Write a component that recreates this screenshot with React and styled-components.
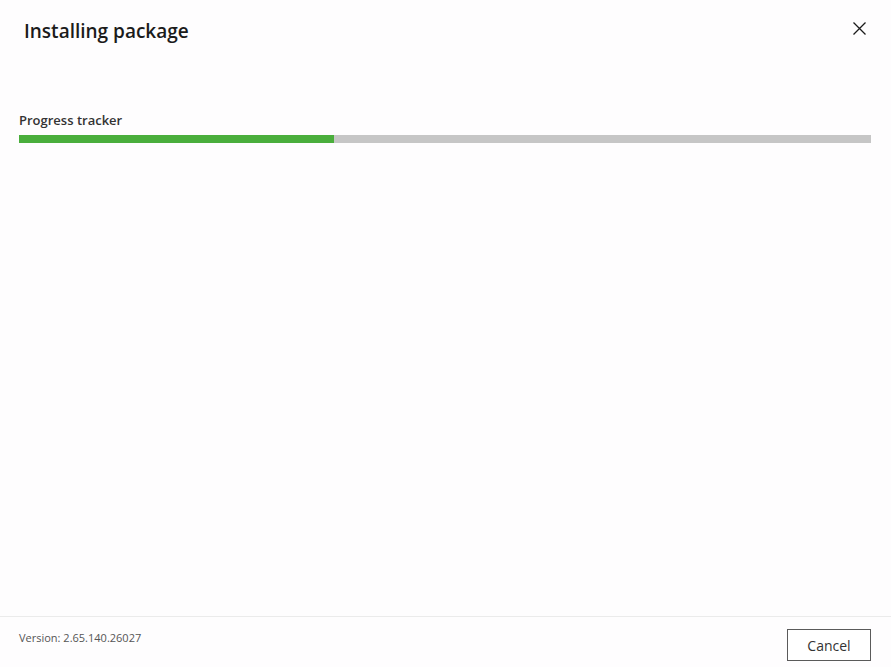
import React from "react";
import styled, { createGlobalStyle } from "styled-components";

const GlobalStyle = createGlobalStyle`
  html, body {
    margin: 0;
    padding: 0;
    background: #fefdfe;
  }
  * { box-sizing: border-box; }
`;

export default function App() {
  const progress = 37;
  return (
    <>
      <GlobalStyle />
      <Dialog>
        <Header>
          <Title>Installing package</Title>
          <CloseButton aria-label="Close">
            <svg width="13" height="13" viewBox="0 0 13 13">
              <path d="M0.5 0.5 L12.5 12.5 M12.5 0.5 L0.5 12.5" stroke="#1b1b1b" strokeWidth="1.3" fill="none" />
            </svg>
          </CloseButton>
        </Header>
        <Body>
          <Label>Progress tracker</Label>
          <Track>
            <Fill style={{ width: `${progress}%` }} />
          </Track>
        </Body>
        <Footer>
          <Version>Version: 2.65.140.26027</Version>
          <CancelButton>Cancel</CancelButton>
        </Footer>
      </Dialog>
    </>
  );
}

const Dialog = styled.div`
  width: 100vw;
  height: 100vh;
  display: flex;
  flex-direction: column;
  font-family: "Open Sans", "Noto Sans", sans-serif;
  color: #1b1b1b;
  background: #fefdfe;
`;

const Header = styled.div`
  display: flex;
  align-items: center;
  justify-content: space-between;
  padding: 15px 25px 0 24px;
  height: 47px;
`;

const Title = styled.h1`
  margin: 0;
  font-size: 19px;
  font-weight: 600;
  line-height: 28px;
`;

const CloseButton = styled.button`
  border: 0;
  background: none;
  padding: 0;
  width: 13px;
  height: 13px;
  display: flex;
  margin-top: -5px;
  cursor: pointer;
`;

const Body = styled.div`
  flex: 1;
  padding: 64px 20px 0 19px;
`;

const Label = styled.div`
  font-size: 13px;
  font-weight: 600;
  color: #333;
  line-height: 18px;
  margin-bottom: 6px;
`;

const Track = styled.div`
  height: 8px;
  background: #c6c6c6;
  display: flex;
`;

const Fill = styled.div`
  height: 100%;
  background: #4aae3c;
`;

const Footer = styled.div`
  height: 51px;
  border-top: 1px solid #ebebeb;
  display: flex;
  justify-content: space-between;
  align-items: flex-start;
  padding: 12px 20px 0 19px;
`;

const Version = styled.div`
  font-size: 11px;
  color: #555;
  line-height: 16px;
  margin-top: 1px;
`;

const CancelButton = styled.button`
  width: 84px;
  height: 32px;
  border: 1px solid #5a5a5a;
  background: #fff;
  font-family: "Open Sans", "Noto Sans", sans-serif;
  font-size: 14px;
  color: #333;
  border-radius: 0;
  cursor: pointer;
`;
